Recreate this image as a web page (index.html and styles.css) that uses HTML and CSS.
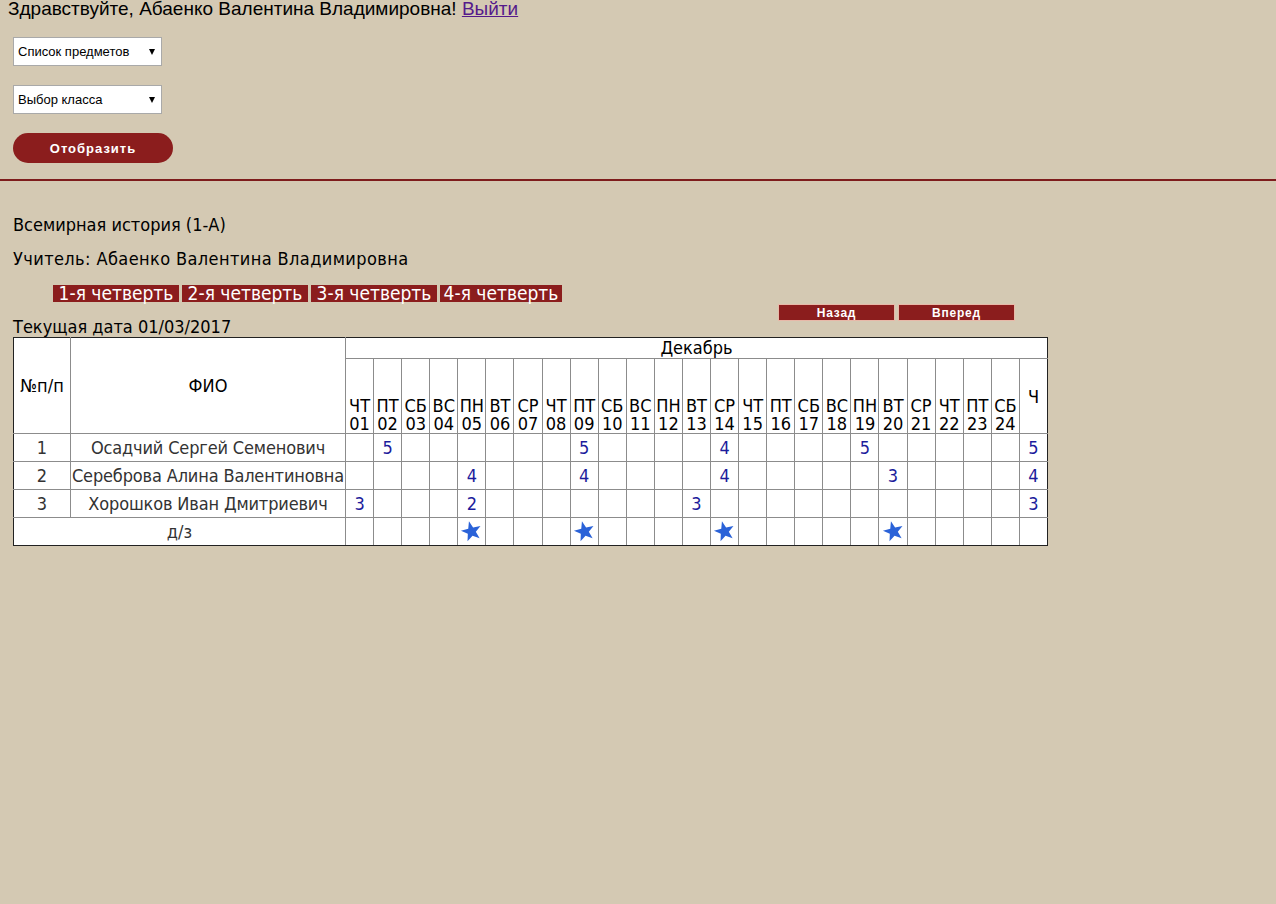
FILE: index.html
```html
<!DOCTYPE html>
<html lang="ru">
<head>
    <meta charset="UTF-8">
    <title>Электронный журнал</title>
    <link rel="stylesheet" href="styles.css">
</head>
<body>
    <div class="greeting">Здравствуйте, Абаенко Валентина Владимировна! <a href="#" class="logout">Выйти</a></div>

    <form class="filters">
        <div class="select-wrap">
            <select><option>Список предметов</option></select>
        </div>
        <div class="select-wrap">
            <select><option>Выбор класса</option></select>
        </div>
        <button type="button" class="show-btn">Отобразить</button>
    </form>

    <hr class="divider">

    <main class="journal">
        <p class="subject">Всемирная история (1-А)</p>
        <p class="teacher">Учитель: Абаенко Валентина Владимировна</p>

        <nav class="quarters">
            <a href="#">1-я четверть</a>
            <a href="#">2-я четверть</a>
            <a href="#">3-я четверть</a>
            <a href="#" class="last">4-я четверть</a>
        </nav>

        <div class="date-row">
            <span class="today">Текущая дата 01/03/2017</span>
            <div class="pager">
                <button type="button">Назад</button>
                <button type="button">Вперед</button>
            </div>
        </div>

        <table class="grades" id="grades">
            <colgroup>
                <col class="col-num">
                <col class="col-name">
            </colgroup>
            <thead>
                <tr>
                    <th rowspan="2" class="edge">№п/п</th>
                    <th rowspan="2" class="fio">ФИО</th>
                    <th colspan="25" class="month">Декабрь</th>
                </tr>
                <tr id="days"></tr>
            </thead>
            <tbody id="rows"></tbody>
        </table>
    </main>

    <script>
        const days = ["ЧТ","ПТ","СБ","ВС","ПН","ВТ","СР","ЧТ","ПТ","СБ","ВС","ПН","ВТ","СР","ЧТ","ПТ","СБ","ВС","ПН","ВТ","СР","ЧТ","ПТ","СБ"];

        const pupils = [
            { name: "Осадчий Сергей Семенович", marks: { 2: 5, 9: 5, 14: 4, 19: 5 }, total: 5 },
            { name: "Сереброва Алина Валентиновна", marks: { 5: 4, 9: 4, 14: 4, 20: 3 }, total: 4 },
            { name: "Хорошков Иван Дмитриевич", marks: { 1: 3, 5: 2, 13: 3 }, total: 3 }
        ];

        // дни, на которые задано домашнее задание
        const homework = [5, 9, 14, 20];

        const star = `<svg class="star" viewBox="0 0 24 24" width="23" height="23">
            <polygon transform="rotate(-14 12 12)" points="12,1 14.6,8.4 22.5,8.6 16.3,13.4 18.5,20.9 12,16.5 5.5,20.9 7.7,13.4 1.5,8.6 9.4,8.4"/>
        </svg>`;

        const pad = n => String(n).padStart(2, "0");

        document.getElementById("days").innerHTML =
            days.map((d, i) => `<th class="day">${d}<br>${pad(i + 1)}</th>`).join("") +
            `<th class="total">Ч</th>`;

        const rows = pupils.map((p, idx) => {
            const cells = days.map((d, i) =>
                `<td class="mark">${p.marks[i + 1] || ""}</td>`).join("");
            return `<tr>
                <td class="num edge">${idx + 1}</td>
                <td class="name">${p.name}</td>
                ${cells}
                <td class="mark">${p.total}</td>
            </tr>`;
        });

        const hwCells = days.map((d, i) =>
            `<td class="mark">${homework.includes(i + 1) ? star : ""}</td>`).join("");
        rows.push(`<tr><td colspan="2" class="hw edge">д/з</td>${hwCells}<td></td></tr>`);

        document.getElementById("rows").innerHTML = rows.join("");
    </script>
</body>
</html>
```

FILE: styles.css
```css
:root {
    --page-bg: #d4c9b3;
    --brand: #8b1d1d;
    --mark-color: #1c1c9c;
    --grid-line: #8c8c8c;
    --table-edge: #222;
}

* {
    box-sizing: border-box;
}

body {
    margin: 0;
    background: var(--page-bg);
    color: #000;
    font-family: "DejaVu Sans Condensed", "DejaVu Sans", sans-serif;
    font-stretch: condensed;
    font-size: 18px;
}

.greeting {
    font-family: "Liberation Sans", Arial, sans-serif;
    font-stretch: normal;
    font-size: 19px;
    line-height: 18px;
    padding-left: 8px;
}

.logout {
    color: #551a8b;
}

/* фильтры */
.filters {
    display: flex;
    flex-direction: column;
    align-items: flex-start;
    gap: 19px;
    padding: 19px 13px 0;
}

.select-wrap {
    position: relative;
    width: 149px;
    height: 29px;
}

.select-wrap select {
    appearance: none;
    width: 100%;
    height: 100%;
    margin: 0;
    padding: 0 4px;
    background: #fff;
    border: 1px solid #a9a9a9;
    border-radius: 0;
    font-family: "Liberation Sans", Arial, sans-serif;
    font-size: 13px;
    color: #000;
}

.select-wrap::after {
    content: "";
    position: absolute;
    right: 7px;
    top: 12px;
    border-left: 3.5px solid transparent;
    border-right: 3.5px solid transparent;
    border-top: 6px solid #000;
    pointer-events: none;
}

.show-btn {
    width: 160px;
    height: 30px;
    border: none;
    border-radius: 15px;
    background: var(--brand);
    color: #fff;
    font-family: "Liberation Sans", Arial, sans-serif;
    font-size: 13px;
    font-weight: 700;
    letter-spacing: 1px;
    cursor: pointer;
}

.divider {
    margin: 16px 0 0;
    height: 2px;
    border: none;
    background: #7e1c1c;
}

/* журнал */
.journal {
    padding: 0 13px;
}

.subject,
.teacher {
    margin: 0;
    line-height: 22px;
}

.subject {
    margin-top: 33px;
}

.teacher {
    margin-top: 12px;
    letter-spacing: 0.4px;
}

.quarters {
    display: flex;
    gap: 3px;
    margin: 15px 0 0 40px;
}

.quarters a {
    display: block;
    width: 126px;
    height: 17px;
    line-height: 17px;
    background: var(--brand);
    color: #fff;
    font-size: 19px;
    text-align: center;
    text-decoration: none;
    white-space: nowrap;
}

.quarters a.last {
    width: 122px;
}

.date-row {
    display: grid;
    grid-template-columns: 765px auto;
    margin-top: 2px;
}

.today {
    margin-top: 13px;
    line-height: 20px;
}

.pager {
    display: flex;
    gap: 3px;
}

.pager button {
    width: 117px;
    height: 17px;
    padding: 0;
    border: 1px solid #e8b8a8;
    background: var(--brand);
    color: #fff;
    font-family: "Liberation Sans", Arial, sans-serif;
    font-size: 12px;
    font-weight: 700;
    letter-spacing: 0.8px;
    cursor: pointer;
}

/* таблица оценок */
.grades {
    width: 1035px;
    table-layout: fixed;
    border-collapse: collapse;
    background: #fff;
    border: 1px solid var(--table-edge);
}

.col-num {
    width: 57px;
}

.col-name {
    width: 275px;
}

.grades th,
.grades td {
    border: 1px solid var(--grid-line);
    padding: 0;
    text-align: center;
    white-space: nowrap;
    overflow: hidden;
    font-weight: normal;
}

/* внешняя рамка темнее внутренней сетки */
.grades thead tr:first-child th {
    border-top-color: var(--table-edge);
}

.grades .edge {
    border-left-color: var(--table-edge);
}

.grades tr > :last-child {
    border-right-color: var(--table-edge);
}

.grades tbody tr:last-child td {
    border-bottom-color: var(--table-edge);
}

.grades thead tr:first-child {
    height: 21px;
}

.grades thead tr:first-child th {
    line-height: 20px;
}

.grades th.day {
    height: 75px;
    vertical-align: bottom;
    line-height: 18px;
    padding-bottom: 0;
}

.grades th.total {
    vertical-align: middle;
}

.grades tbody tr {
    height: 28px;
}

.num,
.name,
.hw {
    color: #333;
}

.name {
    letter-spacing: -0.15px;
}

.mark {
    color: var(--mark-color);
}

.star {
    display: block;
    margin: 0 auto;
    fill: #2a62d8;
}
```
